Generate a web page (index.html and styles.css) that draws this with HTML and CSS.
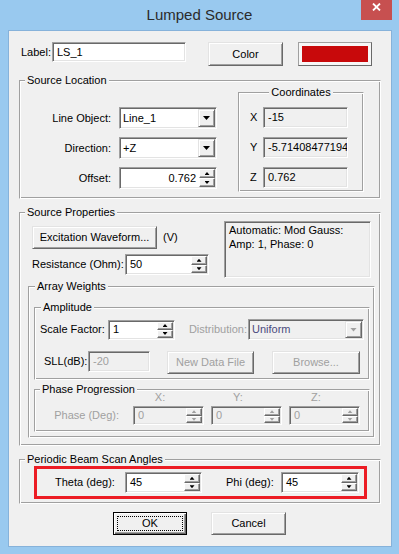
FILE: index.html
```html
<!DOCTYPE html>
<html>
<head>
<meta charset="utf-8">
<title>Lumped Source</title>
<link rel="stylesheet" href="styles.css">
</head>
<body>
<div class="window">
    <div class="titlebar">
        <span class="title">Lumped Source</span>
        <a class="close" href="#"><svg width="9" height="8" viewBox="0 0 9 8"><path d="M1 0.5 L8 7.5 M8 0.5 L1 7.5" stroke="#fff" stroke-width="1.8" fill="none"/></svg></a>
    </div>
    <div class="client">
        <div class="label-row">
            <span class="cap-name">Label:</span>
            <div class="edit name-edit">LS_1</div>
            <button class="btn color-btn">Color</button>
            <div class="swatch"><div class="swatch-fill"></div></div>
        </div>

        <fieldset class="group loc">
            <legend>Source Location</legend>
            <div class="loc-body">
                <div class="loc-form">
                    <span class="cap">Line Object:</span>
                    <div class="combo"><span class="combo-text">Line_1</span><span class="drop"></span></div>
                    <span class="cap">Direction:</span>
                    <div class="combo"><span class="combo-text">+Z</span><span class="drop"></span></div>
                    <span class="cap">Offset:</span>
                    <div class="spin"><span class="spin-text num">0.762</span><span class="spin-btns"><i class="up"></i><i class="down"></i></span></div>
                </div>
                <fieldset class="group coords">
                    <legend>Coordinates</legend>
                    <div class="coords-grid">
                        <span>X</span><div class="edit ro">-15</div>
                        <span>Y</span><div class="edit ro">-5.71408477194</div>
                        <span>Z</span><div class="edit ro">0.762</div>
                    </div>
                </fieldset>
            </div>
        </fieldset>

        <fieldset class="group sp">
            <legend>Source Properties</legend>
            <div class="sp-top">
                <div>
                    <div class="excite-row">
                        <button class="btn excite-btn">Excitation Waveform...</button>
                        <span class="unit">(V)</span>
                    </div>
                    <div class="res-row">
                        <span class="cap-res">Resistance (Ohm):</span>
                        <div class="spin res-spin"><span class="spin-text">50</span><span class="spin-btns"><i class="up"></i><i class="down"></i></span></div>
                    </div>
                </div>
                <div class="edit ro info">Automatic: Mod Gauss:<br>Amp: 1, Phase: 0</div>
            </div>

            <fieldset class="group aw">
                <legend>Array Weights</legend>
                <fieldset class="group amp">
                    <legend>Amplitude</legend>
                    <div class="amp-row1">
                        <span class="cap-scale">Scale Factor:</span>
                        <div class="spin scale-spin"><span class="spin-text">1</span><span class="spin-btns"><i class="up"></i><i class="down"></i></span></div>
                        <span class="cap-dist dis">Distribution:</span>
                        <div class="combo dis-combo"><span class="combo-text">Uniform</span><span class="drop"></span></div>
                    </div>
                    <div class="amp-row2">
                        <span class="cap-sll">SLL(dB):</span>
                        <div class="edit off sll">-20</div>
                        <button class="btn off ndf-btn">New Data File</button>
                        <button class="btn off browse-btn">Browse...</button>
                    </div>
                </fieldset>
                <fieldset class="group pp">
                    <legend>Phase Progression</legend>
                    <div class="pp-grid">
                        <span></span>
                        <span class="axis">X:</span>
                        <span class="axis">Y:</span>
                        <span class="axis">Z:</span>
                        <span class="cap dis">Phase (Deg):</span>
                        <div class="spin off"><span class="spin-text">0</span><span class="spin-btns"><i class="up"></i><i class="down"></i></span></div>
                        <div class="spin off"><span class="spin-text">0</span><span class="spin-btns"><i class="up"></i><i class="down"></i></span></div>
                        <div class="spin off"><span class="spin-text">0</span><span class="spin-btns"><i class="up"></i><i class="down"></i></span></div>
                    </div>
                </fieldset>
            </fieldset>
        </fieldset>

        <fieldset class="group pb">
            <legend>Periodic Beam Scan Angles</legend>
            <div class="scan-box">
                <span class="cap-theta">Theta (deg):</span>
                <div class="spin theta-spin"><span class="spin-text">45</span><span class="spin-btns"><i class="up"></i><i class="down"></i></span></div>
                <span class="cap-phi">Phi (deg):</span>
                <div class="spin phi-spin"><span class="spin-text">45</span><span class="spin-btns"><i class="up"></i><i class="down"></i></span></div>
            </div>
        </fieldset>

        <div class="buttons">
            <button class="btn default ok-btn"><span class="focus">OK</span></button>
            <button class="btn cancel-btn">Cancel</button>
        </div>
    </div>
</div>
</body>
</html>
```

FILE: styles.css
```css
*
{
    box-sizing: border-box;
}

html, body
{
    margin: 0;
}

body
{
    background: #99c9ef;
    font: 11px/13px "Liberation Sans", Arial, sans-serif;
    color: #000;
}

.window
{
    position: relative;
    width: 399px;
    height: 554px;
    background: #99c9ef;
}

.titlebar
{
    height: 30px;
    text-align: center;
}

.title
{
    font-size: 15px;
    line-height: 30px;
    color: #2b2b2b;
}

.close
{
    position: absolute;
    top: 0;
    right: 7px;
    width: 31px;
    height: 20px;
    padding-top: 3px;
    background: #c75050;
    display: flex;
    justify-content: center;
    align-items: flex-start;
}

.client
{
    margin-left: 8px;
    width: 384px;
    height: 517px;
    background: #f0f0f0;
    border: 1px solid #86b2da;
}

/* 3d control borders */

.edit, .spin, .combo
{
    border: 1px solid;
    border-color: #a0a0a0 #fff #fff #a0a0a0;
    box-shadow: inset 1px 1px 0 #696969, inset -1px -1px 0 #e3e3e3;
    background: #fff;
    white-space: nowrap;
    overflow: hidden;
}

.edit
{
    padding: 0 4px;
    display: flex;
    align-items: center;
}

.edit.ro, .edit.off
{
    background: #f0f0f0;
}

.off, .dis
{
    color: #a0a0a0;
}

.btn
{
    font: inherit;
    color: #000;
    margin: 0;
    padding: 0;
    background: #f0f0f0;
    border: 1px solid;
    border-color: #e3e3e3 #696969 #696969 #e3e3e3;
    box-shadow: inset 1px 1px 0 #fff, inset -1px -1px 0 #a0a0a0;
}

.btn.off
{
    color: #a0a0a0;
}

.btn.default
{
    border: 1px solid #000;
    box-shadow: inset 1px 1px 0 #fff, inset -1px -1px 0 #696969, inset -2px -2px 0 #a0a0a0;
    padding: 3px;
    display: flex;
}

.focus
{
    flex: 1;
    border: 1px dotted #000;
    display: flex;
    align-items: center;
    justify-content: center;
}

/* spinners */

.spin
{
    display: flex;
    padding: 1px 1px 1px 0;
}

.spin-text
{
    flex: 1;
    padding: 0 4px;
    display: flex;
    align-items: center;
}

.spin-text.num
{
    justify-content: flex-end;
    padding-right: 3px;
}

.spin.off
{
    background: #f0f0f0;
    color: #a0a0a0;
}

.spin-btns
{
    width: 16px;
    display: flex;
    flex-direction: column;
}

.spin-btns i
{
    flex: 1;
    background: #f0f0f0;
    border: 1px solid;
    border-color: #fff #696969 #696969 #fff;
    box-shadow: inset -1px -1px 0 #a0a0a0;
    display: flex;
    align-items: center;
    justify-content: center;
}

.spin-btns i::after
{
    content: "";
    width: 5px;
    height: 3px;
    background: #000;
}

.spin-btns i.up::after
{
    clip-path: polygon(50% 0, 100% 100%, 0 100%);
}

.spin-btns i.down::after
{
    clip-path: polygon(0 0, 100% 0, 50% 100%);
}

.spin.off .spin-btns i::after
{
    background: #a0a0a0;
}

/* combo boxes */

.combo
{
    display: flex;
    padding: 1px 1px 1px 0;
}

.combo-text
{
    flex: 1;
    padding: 0 3px;
    display: flex;
    align-items: center;
}

.drop
{
    width: 17px;
    background: #f0f0f0;
    border: 1px solid;
    border-color: #e3e3e3 #696969 #696969 #e3e3e3;
    box-shadow: inset 1px 1px 0 #fff, inset -1px -1px 0 #a0a0a0;
    display: flex;
    align-items: center;
    justify-content: center;
}

.drop::after
{
    content: "";
    width: 7px;
    height: 4px;
    background: #000;
    clip-path: polygon(0 0, 100% 0, 50% 100%);
}

.dis-combo
{
    background: #f0f0f0;
}

.dis-combo .combo-text
{
    color: #4b4b7d;
}

.dis-combo .drop::after
{
    background: #a0a0a0;
}

/* group boxes */

.group
{
    margin: 0;
    padding: 0;
    min-width: 0;
    border: 1px solid;
    border-color: #a0a0a0 #fff #fff #a0a0a0;
    box-shadow: inset 1px 1px 0 #fff, inset -1px -1px 0 #a0a0a0;
}

.group > legend
{
    padding: 0 2px;
    margin-left: 5px;
    line-height: 13px;
    background: #f0f0f0;
}

/* label row */

.label-row
{
    display: flex;
    align-items: flex-start;
    padding: 11px 0 0 12px;
}

.cap-name
{
    width: 31px;
    line-height: 20px;
}

.name-edit
{
    width: 134px;
    height: 20px;
}

.color-btn
{
    margin-left: 22px;
    width: 75px;
    height: 24px;
}

.swatch
{
    margin-left: 15px;
    width: 74px;
    height: 24px;
    padding: 3px;
    background: #f7f7f7;
    border: 1px solid;
    border-color: #a0a0a0 #696969 #696969 #a0a0a0;
}

.swatch-fill
{
    height: 100%;
    background: #c8090b;
}

/* source location */

.loc
{
    margin: 8px 10px 0;
    padding-bottom: 6px;
}

.loc-body
{
    display: flex;
    align-items: flex-start;
}

.loc-form
{
    display: grid;
    grid-template-columns: 91px 98px;
    grid-auto-rows: 22px;
    column-gap: 8px;
    row-gap: 8px;
    align-items: center;
    margin-top: 20px;
}

.loc-form .combo, .loc-form .spin
{
    height: 22px;
}

.cap
{
    text-align: right;
}

.coords
{
    margin: -1px 0 0 21px;
    width: 126px;
    padding-bottom: 3px;
}

.coords > legend
{
    margin: 0 auto;
}

.coords-grid
{
    display: grid;
    grid-template-columns: 13px 85px;
    grid-auto-rows: 21px;
    row-gap: 9px;
    align-items: center;
    padding-left: 11px;
    margin-top: 8px;
}

.coords-grid .edit
{
    height: 21px;
}

/* source properties */

.sp
{
    margin: 7px 10px 0;
    padding-bottom: 7px;
}

.sp-top
{
    display: grid;
    grid-template-columns: 192px 147px;
    align-items: start;
    margin-left: 12px;
}

.excite-row
{
    display: flex;
    align-items: center;
    margin-top: 7px;
}

.excite-btn
{
    width: 125px;
    height: 23px;
}

.unit
{
    margin-left: 6px;
}

.res-row
{
    display: flex;
    align-items: center;
    margin-top: 5px;
}

.cap-res
{
    width: 93px;
    white-space: nowrap;
}

.res-spin
{
    width: 84px;
    height: 21px;
}

.info
{
    margin-top: 2px;
    height: 57px;
    padding: 1px 4px;
    line-height: 14px;
    display: block;
    white-space: normal;
}

.aw
{
    margin: 2px 0 0 8px;
    width: 347px;
    padding-bottom: 5px;
}

.aw > legend, .amp > legend
{
    margin-left: 6px;
}

.amp
{
    margin: 8px 0 0 5px;
    width: 336px;
    padding-bottom: 5px;
}

.amp-row1
{
    display: flex;
    align-items: center;
    margin-top: 5px;
    height: 21px;
}

.cap-scale
{
    width: 73px;
    padding-left: 5px;
}

.scale-spin
{
    width: 67px;
    height: 20px;
}

.cap-dist
{
    width: 73px;
    text-align: right;
    padding-right: 1px;
}

.dis-combo
{
    width: 116px;
    height: 21px;
}

.amp-row2
{
    display: flex;
    align-items: flex-start;
    margin-top: 11px;
}

.cap-sll
{
    width: 53px;
    padding-left: 9px;
    line-height: 21px;
}

.sll
{
    width: 62px;
    height: 21px;
}

.ndf-btn
{
    margin-left: 17px;
    width: 87px;
    height: 23px;
}

.browse-btn
{
    margin-left: 18px;
    width: 88px;
    height: 23px;
}

.pp
{
    margin: 3px 0 0 5px;
    width: 336px;
    padding-bottom: 6px;
}

.pp-grid
{
    display: grid;
    grid-template-columns: 91px 71px 71px 71px;
    grid-template-rows: 13px 19px;
    column-gap: 7px;
    row-gap: 2px;
    align-items: center;
    margin-top: -5px;
}

.pp-grid .cap
{
    padding-right: 7px;
}

.axis
{
    color: #a0a0a0;
    text-align: center;
    padding-right: 17px;
}

.pp-grid .spin
{
    height: 19px;
}

/* periodic beam scan */

.pb
{
    margin: 7px 10px 0;
    padding-bottom: 4px;
}

.scan-box
{
    margin-left: 14px;
    width: 333px;
    height: 33px;
    border: 3px solid #ec1c24;
    display: flex;
    align-items: center;
    padding-left: 18px;
}

.cap-theta
{
    width: 70px;
}

.theta-spin
{
    width: 77px;
    height: 21px;
}

.cap-phi
{
    margin-left: 24px;
    width: 55px;
}

.phi-spin
{
    width: 78px;
    height: 21px;
}

/* dialog buttons */

.buttons
{
    display: flex;
    margin-top: 8px;
    padding-left: 104px;
}

.ok-btn
{
    width: 74px;
    height: 23px;
}

.cancel-btn
{
    margin-left: 24px;
    width: 75px;
    height: 23px;
}
```
